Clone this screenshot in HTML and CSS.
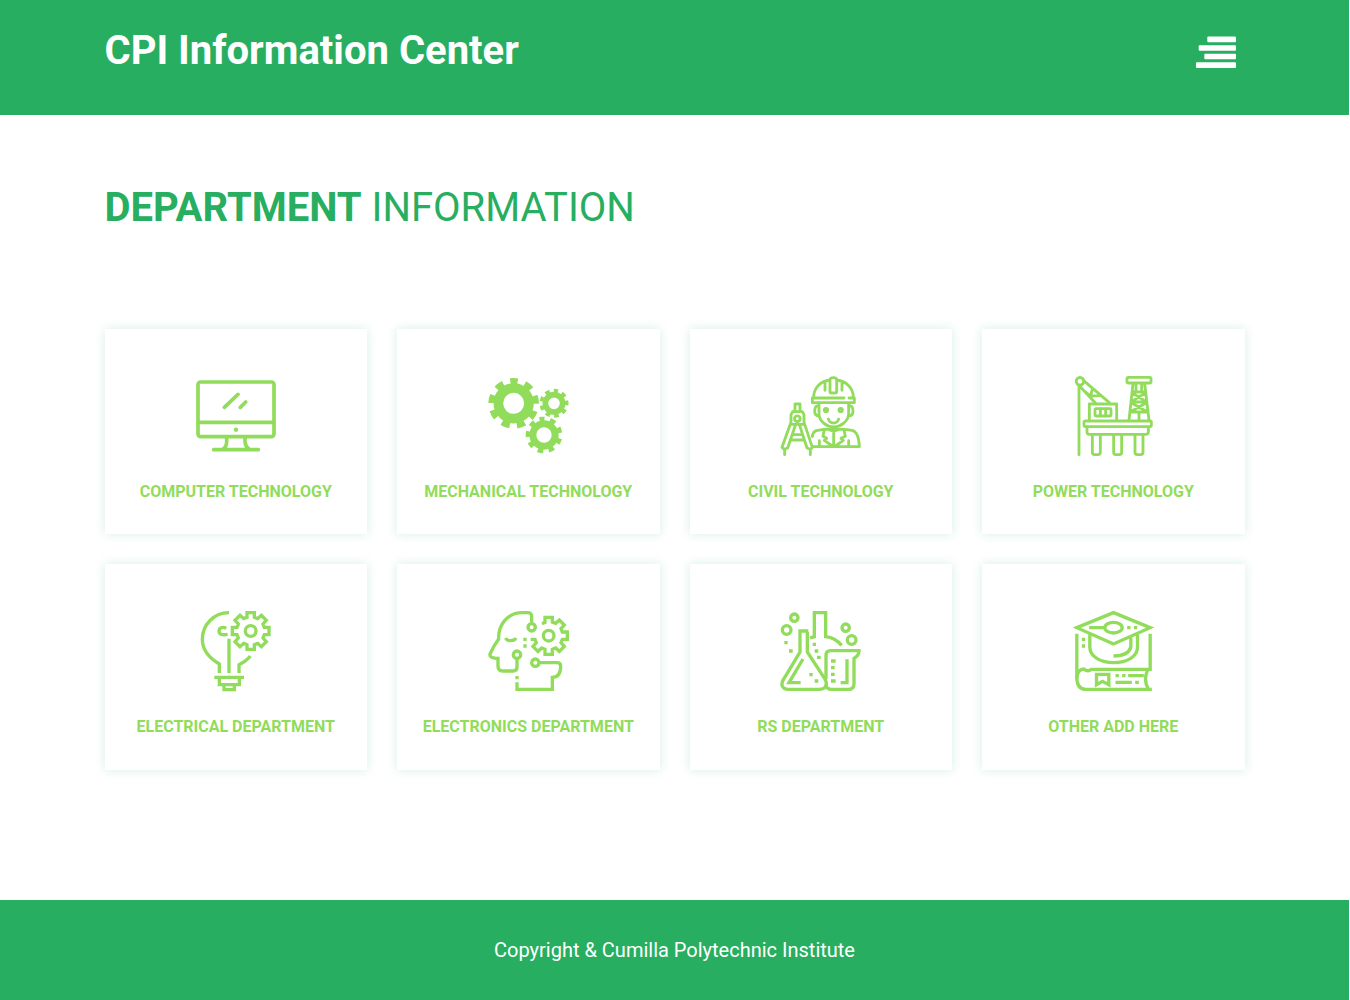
FILE: index.html
```html
<!DOCTYPE html>
<html lang="en">
<head>
<meta charset="utf-8">
<title>CPI Information Center</title>
<link rel="stylesheet" href="styles.css">
</head>
<body>
<svg class="defs" aria-hidden="true">
  <path id="cog" d="M-11-41V-55H11V-41L21-37 32-47 47-32 37-21 41-11H55V11H41L37 21 47 32 32 47 21 37 11 41V55H-11V41L-21 37-32 47-47 32-37 21-41 11H-55V-11H-41L-37-21-47-32-32-47-21-37Z"/>
</svg>
<header class="header">
  <div class="container header-row">
    <h1 class="brand">CPI Information Center</h1>
    <svg class="menu" viewBox="0 0 40 33" fill="#fff"><rect x="11.3" y="0.6" width="28.7" height="5.6" rx="1"/><rect x="2.7" y="9.2" width="37.3" height="5.6" rx="1"/><rect x="8.3" y="17.7" width="31.7" height="5.6" rx="1"/><rect x="0" y="26.3" width="40" height="5.6" rx="1"/></svg>
  </div>
</header>
<main class="container main">
  <h2 class="title"><b>DEPARTMENT</b> INFORMATION</h2>
  <div class="grid">
    <a class="card">
      <svg class="icon" viewBox="18 18 240 240" stroke-width="11">
        <rect x="24" y="36" width="228" height="164" rx="8"/>
        <path d="M24 157H252M103 112 144 73M151 112 167 96M71 239H205M110 202V215Q110 230 99 237M165 202V215Q166 230 177 237"/>
        <circle class="solid" cx="138" cy="179" r="6.5"/>
      </svg>
      <span class="label">COMPUTER TECHNOLOGY</span>
    </a>
    <a class="card">
      <svg class="icon butt" viewBox="18 18 240 240">
        <circle cx="95" cy="100" r="46" stroke-width="29"/>
        <circle cx="95" cy="100" r="67" stroke-width="18" pathLength="360" stroke-dasharray="21 19" stroke-dashoffset="10.5" transform="rotate(-90 95 100)"/>
        <circle cx="216" cy="100" r="26" stroke-width="17"/>
        <circle cx="216" cy="100" r="38" stroke-width="11" pathLength="360" stroke-dasharray="21 19" stroke-dashoffset="10.5" transform="rotate(-82 216 100)"/>
        <circle cx="186" cy="195" r="33.5" stroke-width="21"/>
        <circle cx="186" cy="195" r="48.5" stroke-width="13" pathLength="360" stroke-dasharray="20 20" stroke-dashoffset="10" transform="rotate(-98 186 195)"/>
      </svg>
      <span class="label">MECHANICAL TECHNOLOGY</span>
    </a>
    <a class="card">
      <svg class="icon" viewBox="18 18 240 240" stroke-width="8.5">
        <path d="M207 84H112V98H238V84H222M116 82C116 54 135 34 165 30M185 30C215 34 235 54 235 82M165 65V30Q165 23 175 23T185 30V65Q185 69 180 69H170Q165 69 165 65ZM150 38V61M201 38V61"/>
        <path d="M132 100V134C134 155 155 171 176 171S218 155 221 134V100M130 107C119 107 119 119 119 124S121 138 132 138M223 107C234 107 234 119 234 124S232 138 221 138M160 147C164 163 187 163 191 147"/>
        <circle cx="153" cy="120" r="5"/><circle cx="197" cy="120" r="5"/>
        <path d="M112 230H253C252 205 247 184 231 181L209 178H146L124 182Q113 186 112 200M160 178Q175 187 193 178M176 187V228M148 179 144 199 155 205 148 211 172 228M207 179 211 199 198 205 205 211 181 228M133 212V228M221 212V228"/>
        <path d="M60 125V102H75V125M53 125H82L87 134V157L112 232 107 238 96 234 74 166M53 125 48 134V157L21 232 27 238 38 234 61 166M50 163H85M56 194H80M48 210H86M29 239V254M106 239V254"/>
        <circle cx="67" cy="146" r="8.5"/>
      </svg>
      <span class="label">CIVIL TECHNOLOGY</span>
    </a>
    <a class="card">
      <svg class="icon" viewBox="17 18 240 240" stroke-width="8.5">
        <circle cx="38" cy="34" r="11.5"/>
        <path d="M35 46V254M49 32 126 98M36 47 84 99M76 56 69 78 55 66M69 78 99 77"/>
        <path d="M66 150V102H148V150"/><rect x="83" y="116" width="48" height="22" rx="3"/><path d="M99 117V137M115 117V137"/>
        <rect x="179" y="22" width="72" height="17" rx="4"/>
        <path d="M197 42 185 150M232 42 245 150M206 42V61M223 42V61M195 66H234M192 96H237M190 126H240M197 70 235 94M232 70 194 94M194 100 237 124M235 100 192 124M215 130V150"/>
        <rect x="50" y="153" width="202" height="17" rx="4"/>
        <path d="M59 171V186Q59 193 66 193H235Q243 193 243 186V171M75 196V247Q75 254 82 254H92Q99 254 99 247V196M139 196V247Q139 254 146 254H156Q163 254 163 247V196M203 196V247Q203 254 210 254H220Q227 254 227 247V196"/>
      </svg>
      <span class="label">POWER TECHNOLOGY</span>
    </a>
    <a class="card">
      <svg class="icon butt" viewBox="18 18 240 240" stroke-width="10">
        <path d="M117 23C72 23 37 59 37 103C37 137 57 159 88 177V204M181 153Q171 167 147 179V204M117 101V204M73 217H162M88 221V239H148V221M102 243V254H133V243M109 70C100 65 87 67 87 78S98 91 113 88"/>
        <use href="#cog" x="182" y="78"/><circle cx="182" cy="78" r="16"/>
      </svg>
      <span class="label">ELECTRICAL DEPARTMENT</span>
    </a>
    <a class="card">
      <svg class="icon butt" viewBox="18 18 240 240" stroke-width="10">
        <path d="M149 55V35Q149 23 137 23H121C76 23 48 60 50 102Q36 121 24 147C22 156 31 160 48 160V184Q48 198 62 198H93Q105 198 105 187V161M71 99Q74 107 86 107T102 99M172 173H225Q236 173 236 184C236 203 229 217 211 217V253H105V232M105 213V223M129 98V108M129 118V128"/>
        <circle cx="149" cy="67" r="11"/><circle cx="105" cy="149" r="11"/><circle cx="160" cy="173" r="11"/>
        <path transform="translate(200 92)" d="M-54 11H-41L-37 21-47 32-32 47-21 37-11 41V56H11V41L21 37 32 47 47 32 37 21 41 11H56V-11H41L37-21 47-32 32-47 21-37 11-41V-55H-11V-40L-20-36"/>
        <circle cx="200" cy="92" r="16"/>
      </svg>
      <span class="label">ELECTRONICS DEPARTMENT</span>
    </a>
    <a class="card">
      <svg class="icon butt" viewBox="18 18 240 240" stroke-width="10">
        <circle cx="58" cy="38" r="11"/><circle cx="35" cy="75" r="13"/><circle cx="212" cy="68" r="11"/><circle cx="230" cy="105" r="13"/>
        <path d="M105 99 118 95V23H152V95Q180 98 200 121M70 78H100M75 80V141L28 219C14 239 22 253 40 253H132C152 253 160 239 149 221L97 141V80M84 162 42 233H77"/>
        <path d="M153 222V151Q153 137 167 137H252Q253 151 237 160V236Q237 253 220 253H168Q153 253 153 238M216 163V233H197"/>
        <path d="M28 113H38M42 138H53M113 118H123M119 138H130M126 157H137M103 209H113M119 228H130M168 168H182M168 188H179M168 208H179M168 228H182"/>
      </svg>
      <span class="label">RS DEPARTMENT</span>
    </a>
    <a class="card">
      <svg class="icon butt" viewBox="17.5 18 240 240" stroke-width="10">
        <path d="M139 23 249 68 139 117 29 68ZM66 68H111M180 68H190M200 68H210"/><ellipse cx="139" cy="68" rx="26" ry="16"/>
        <path d="M68 88V127C68 156 102 173 140 173S211 156 211 127V88M191 98V126Q184 153 139 153M249 86V190M29 86V222M44 103H54M44 123H54"/>
        <path d="M29 222V218Q32 192 50 192Q62 202 73 193H254M29 220Q30 253 56 253H254M241 196Q228 224 243 251M88 208H125V239L106 229 88 239ZM145 212H155M165 212H175M183 212H230M145 232H194M204 232H215"/>
      </svg>
      <span class="label">OTHER ADD HERE</span>
    </a>
  </div>
</main>
<footer class="footer">Copyright &amp; Cumilla Polytechnic Institute</footer>
</body>
</html>
```

FILE: styles.css
```css
* { box-sizing: border-box; }
html { background: #fff; }
body {
  margin: 0;
  width: 1349px;
  min-height: 1000px;
  display: flex;
  flex-direction: column;
  font-family: Roboto, sans-serif;
  background: #fff;
}
.defs { display: none; }
.container { width: 1140px; margin: 0 auto; }
.header { height: 115px; background: #27ae60; color: #fff; }
.header-row { display: flex; justify-content: space-between; }
.brand { margin: 27px 0 0; font-size: 40px; line-height: 48px; font-weight: 700; }
.menu { width: 40px; height: 33px; margin: 36px 8.5px 0 0; }
.main { flex: 1; padding-top: 69px; }
.title { margin: 0; font-size: 40px; line-height: 48px; font-weight: 400; color: #27ae60; }
.title b { font-weight: 700; }
.grid {
  margin-top: 97px;
  display: grid;
  grid-template-columns: repeat(4, 1fr);
  grid-auto-rows: 205.4px;
  gap: 30px;
}
.card {
  display: flex;
  flex-direction: column;
  align-items: center;
  padding-top: 47px;
  background: #fff;
  box-shadow: 0 0 10px rgba(39, 174, 120, .2);
}
.icon {
  width: 80px;
  height: 80px;
  overflow: visible;
  fill: none;
  stroke: #91dc5a;
  stroke-linecap: round;
  stroke-linejoin: round;
}
.butt { stroke-linecap: butt; stroke-linejoin: miter; }
.solid { fill: #91dc5a; stroke: none; }
.label { margin-top: 26px; font-size: 16px; line-height: 20px; font-weight: 700; color: #91dc5a; }
.footer {
  height: 100px;
  background: #27ae60;
  color: #fff;
  font-size: 20px;
  line-height: 100px;
  text-align: center;
}
```
